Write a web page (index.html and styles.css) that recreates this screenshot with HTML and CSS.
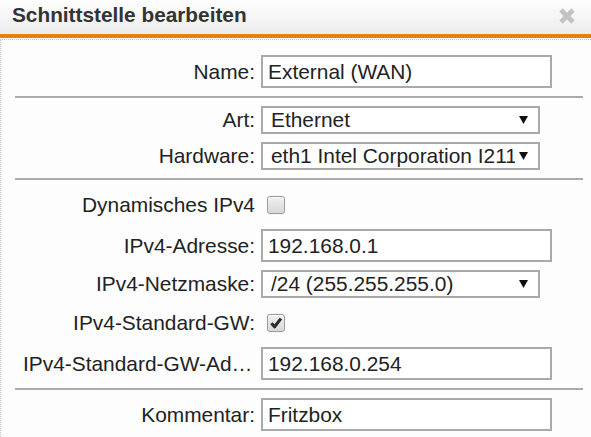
FILE: index.html
```html
<!DOCTYPE html>
<html lang="de">
<head>
<meta charset="utf-8">
<title>Schnittstelle bearbeiten</title>
<link rel="stylesheet" href="styles.css">
</head>
<body>
<div class="dialog">
  <div class="titlebar">
    <span class="title">Schnittstelle bearbeiten</span>
    <svg class="close" viewBox="0 0 18 18" aria-label="Schließen">
      <path d="M3 3 L15 15 M15 3 L3 15" stroke="#c2c2c2" stroke-width="4.6" fill="none"/>
    </svg>
  </div>
  <div class="panel">
    <div class="row">
      <span class="lbl">Name:</span>
      <input class="txt" type="text" value="External (WAN)">
    </div>
    <div class="sep"></div>
    <div class="row">
      <span class="lbl">Art:</span>
      <div class="select"><span class="val">Ethernet</span><svg class="arrow" viewBox="0 0 9 8"><polygon points="0,0 9,0 4.5,8" fill="#111"/></svg></div>
    </div>
    <div class="row">
      <span class="lbl">Hardware:</span>
      <div class="select"><span class="val">eth1 Intel Corporation I211 Gigabit Network Connection</span><svg class="arrow" viewBox="0 0 9 8"><polygon points="0,0 9,0 4.5,8" fill="#111"/></svg></div>
    </div>
    <div class="sep"></div>
    <div class="row chk">
      <span class="lbl">Dynamisches IPv4</span>
      <span class="cb"></span>
    </div>
    <div class="row">
      <span class="lbl">IPv4-Adresse:</span>
      <input class="txt" type="text" value="192.168.0.1">
    </div>
    <div class="row">
      <span class="lbl">IPv4-Netzmaske:</span>
      <div class="select"><span class="val">/24 (255.255.255.0)</span><svg class="arrow" viewBox="0 0 9 8"><polygon points="0,0 9,0 4.5,8" fill="#111"/></svg></div>
    </div>
    <div class="row chk">
      <span class="lbl">IPv4-Standard-GW:</span>
      <span class="cb"><svg viewBox="0 0 16 16"><path d="M3.4 8.2 L6.6 11.8 L12.9 3.6" stroke="#2b2b2b" stroke-width="3.1" fill="none" stroke-linejoin="round"/></svg></span>
    </div>
    <div class="row">
      <span class="lbl">IPv4-Standard-GW-Adresse:</span>
      <input class="txt" type="text" value="192.168.0.254">
    </div>
    <div class="sep"></div>
    <div class="row">
      <span class="lbl">Kommentar:</span>
      <input class="txt" type="text" value="Fritzbox">
    </div>
  </div>
</div>
</body>
</html>
```
FILE: styles.css
```css
html, body {
  margin: 0;
  padding: 0;
  background: #fdfdfd;
  font-family: "Liberation Sans", Arial, sans-serif;
  color: #222;
}

.dialog {
  width: 591px;
  height: 437px;
  overflow: hidden;
}

.titlebar {
  height: 34px;
  display: flex;
  justify-content: space-between;
  align-items: flex-start;
  padding-left: 12px;
  background: linear-gradient(#fefefe, #ececec);
  border-bottom: 4px solid #e8800c;
}

.title {
  font-size: 20.8px;
  font-weight: bold;
  line-height: 30px;
  color: #333;
}

.close {
  width: 18px;
  height: 18px;
  margin: 7px 15px 0 0;
}

.panel {
  margin-top: 1px;
  border-top: 1px dotted #c4c4c4;
  border-left: 1px dotted #c4c4c4;
  background: #fdfdfd;
  padding: 15px 8px 20px 14px;
  display: flex;
  flex-direction: column;
  gap: 8px;
}

.row {
  display: grid;
  grid-template-columns: 232px auto;
  column-gap: 6px;
  align-items: center;
  justify-items: start;
  padding-left: 8px;
}

.row.chk {
  height: 33px;
}

.lbl {
  justify-self: stretch;
  font-size: 20.9px;
  color: #222;
  text-align: right;
  white-space: nowrap;
  overflow: hidden;
  text-overflow: ellipsis;
}

.txt {
  box-sizing: border-box;
  width: 291px;
  height: 33px;
  margin: 0;
  padding: 0 5px;
  border: 2px solid #a9a9a9;
  background: #fff;
  font-family: "Liberation Sans", Arial, sans-serif;
  font-size: 20.9px;
  color: #222;
  outline: none;
}

.select {
  box-sizing: border-box;
  width: 279px;
  height: 28px;
  border: 2px solid #a9a9a9;
  background: #fff;
  display: flex;
  align-items: center;
  padding: 0 10px 0 8px;
}

.select .val {
  flex: 1;
  min-width: 0;
  overflow: hidden;
  white-space: nowrap;
  font-size: 20.9px;
  color: #222;
}

.arrow {
  flex: none;
  width: 9px;
  height: 8px;
  margin-left: 4px;
}

.sep {
  height: 2px;
  background: #aaaaaa;
}

.cb {
  box-sizing: border-box;
  width: 18px;
  height: 18px;
  margin-left: 6px;
  border: 1px solid #9c9c9c;
  border-radius: 3px;
  background: linear-gradient(#f0f0f0, #d8d8d8);
  box-shadow: 0 0 1px rgba(0, 0, 0, 0.25), inset 0 1px 1px #fff;
  display: flex;
  align-items: center;
  justify-content: center;
}

.cb svg {
  width: 16px;
  height: 16px;
}
```
